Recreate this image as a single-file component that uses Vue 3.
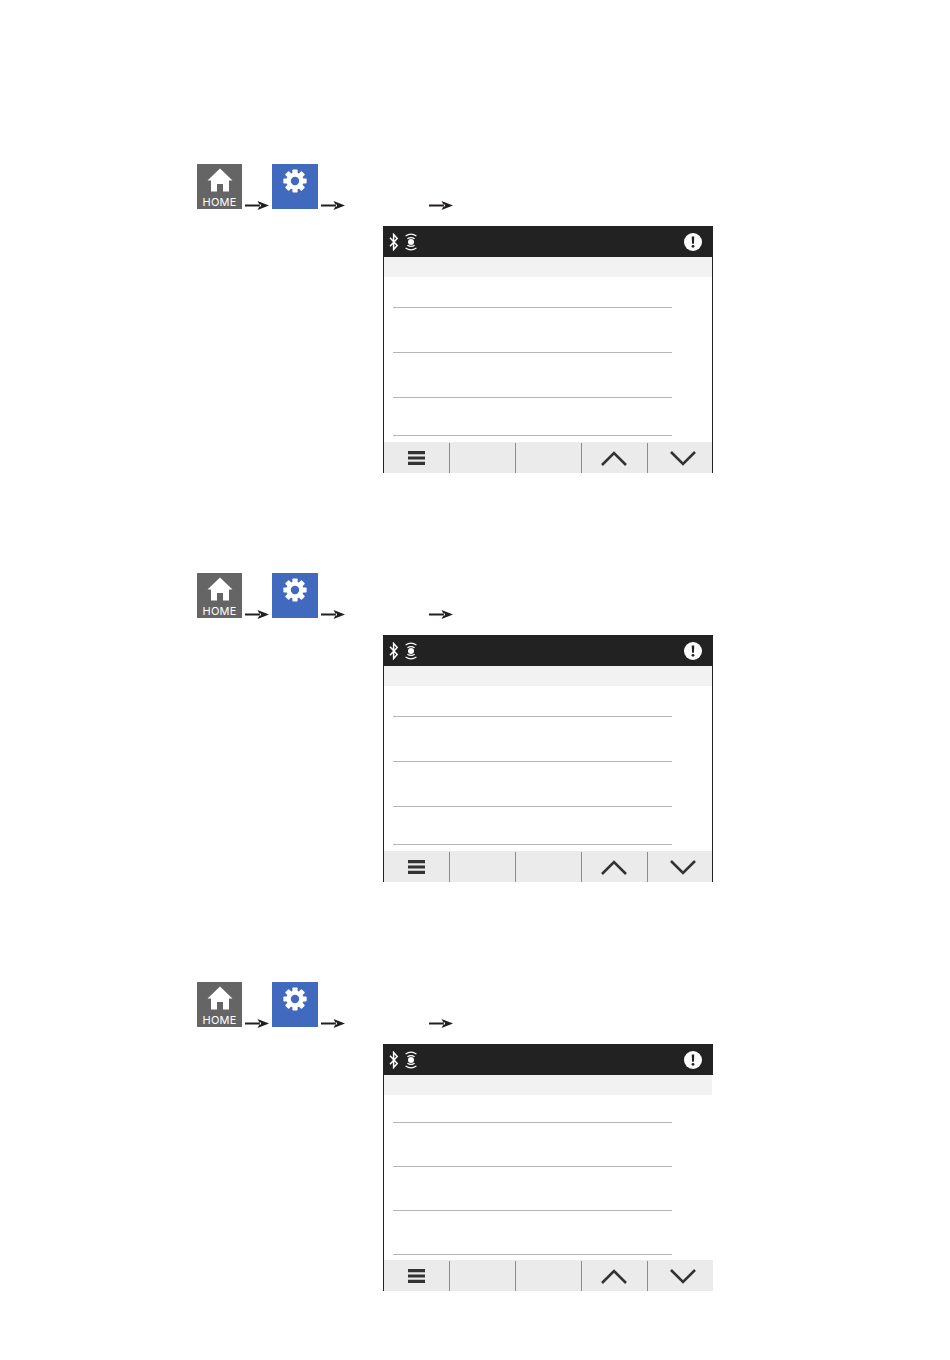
<template>
  <div class="page">
    <section v-for="panel in panels" :key="panel.id" class="panel">
      <div class="steps">
        <div class="tile tile-home">
          <svg class="home-icon" viewBox="0 0 26 24" width="26" height="24">
            <path d="M13 0.5 L25.5 12.5 L22 12.5 L22 23.5 L16 23.5 L16 16 L10 16 L10 23.5 L4 23.5 L4 12.5 L0.5 12.5 Z" fill="#fff" />
          </svg>
          <span class="home-label">HOME</span>
        </div>
        <svg class="arrow" viewBox="0 0 24 9" width="24" height="9">
          <path d="M0 3.4h16v2.2H0z M24 4.5 L12.5 0 L15 4.5 L12.5 9 Z" fill="#231f20" />
        </svg>
        <div class="tile tile-settings">
          <svg class="gear-icon" viewBox="0 0 24 24" width="24" height="24">
            <rect
              v-for="angle in teeth"
              :key="angle"
              x="9.4"
              y="0.4"
              width="5.2"
              height="6"
              rx="0.8"
              fill="#fff"
              :transform="`rotate(${angle} 12 12)`"
            />
            <circle cx="12" cy="12" r="6.4" fill="none" stroke="#fff" stroke-width="4.4" />
          </svg>
        </div>
        <svg class="arrow" viewBox="0 0 24 9" width="24" height="9">
          <path d="M0 3.4h16v2.2H0z M24 4.5 L12.5 0 L15 4.5 L12.5 9 Z" fill="#231f20" />
        </svg>
        <svg class="arrow arrow-last" viewBox="0 0 24 9" width="24" height="9">
          <path d="M0 3.4h16v2.2H0z M24 4.5 L12.5 0 L15 4.5 L12.5 9 Z" fill="#231f20" />
        </svg>
      </div>

      <div class="screen" :class="{ 'screen-open': panel.open }">
        <div class="status-bar">
          <svg class="bt-icon" viewBox="0 0 10 18" width="10" height="18">
            <path d="M1 4.8 L8.2 12.6 L4.6 16.6 L4.6 1.4 L8.2 5.4 L1 13.2" fill="none" stroke="#fff" stroke-width="1.5" />
          </svg>
          <svg class="signal-icon" viewBox="0 0 12 18" width="12" height="18">
            <circle cx="6" cy="9" r="3" fill="#fff" />
            <path d="M0.6 3 Q6 -0.6 11.4 3 M2.4 5.8 Q6 3.4 9.6 5.8 M2.4 12.2 Q6 14.6 9.6 12.2 M0.6 15 Q6 18.6 11.4 15" fill="none" stroke="#fff" stroke-width="1.2" />
          </svg>
          <svg class="alert-icon" viewBox="0 0 18 18" width="18" height="18">
            <circle cx="9" cy="9" r="9" fill="#fff" />
            <path d="M7.7 3.4h2.6l-0.4 7.4H8.1z" fill="#222" />
            <circle cx="9" cy="13.3" r="1.4" fill="#222" />
          </svg>
        </div>
        <div class="body">
          <div class="subheader"></div>
          <div class="rows">
            <div v-for="(h, i) in panel.rows" :key="i" class="row" :style="{ height: h + 'px' }"></div>
          </div>
          <div class="softkeys">
            <div class="softkey">
              <svg viewBox="0 0 17 14" width="17" height="14">
                <path d="M0 0h17v3.2H0z M0 5.4h17v3.2H0z M0 10.8h17v3.2H0z" fill="#333" />
              </svg>
            </div>
            <div class="softkey"></div>
            <div class="softkey"></div>
            <div class="softkey softkey-up">
              <svg viewBox="0 0 26 15" width="26" height="15">
                <path d="M1 14 L13 2 L25 14" fill="none" stroke="#333" stroke-width="2.6" />
              </svg>
            </div>
            <div class="softkey softkey-last">
              <svg viewBox="0 0 26 15" width="26" height="15">
                <path d="M1 1 L13 13 L25 1" fill="none" stroke="#333" stroke-width="2.6" />
              </svg>
            </div>
          </div>
        </div>
      </div>
    </section>
  </div>
</template>

<script setup>
const teeth = [0, 45, 90, 135, 180, 225, 270, 315];

const panels = [
  { id: 1, rows: [31, 45, 45, 38], open: false },
  { id: 2, rows: [31, 45, 45, 38], open: false },
  { id: 3, rows: [28, 44, 44, 44], open: true },
];
</script>

<style>
html,
body {
  background: #fff;
}
</style>

<style scoped>
.page {
  width: 950px;
  height: 1360px;
  box-sizing: border-box;
  padding: 164px 0 0 197px;
  display: flex;
  flex-direction: column;
  gap: 100px;
  font-family: Inter, "Liberation Sans", sans-serif;
}

.steps {
  display: flex;
  align-items: flex-end;
  gap: 3px;
  height: 46px;
}

.tile {
  width: 45px;
  height: 45px;
  align-self: flex-start;
  display: flex;
  flex-direction: column;
  align-items: center;
}

.tile-home {
  background-color: #656565;
}

.tile-settings {
  width: 46px;
  background-color: #4169be;
}

.home-icon {
  margin-top: 4px;
}

.home-label {
  margin-top: 4px;
  color: #fff;
  font-size: 11px;
  line-height: 13px;
  letter-spacing: 0.2px;
}

.gear-icon {
  margin-top: 5px;
}

.arrow-last {
  margin-left: 81px;
}

.screen {
  width: 330px;
  margin: 16px 0 0 186px;
}

.status-bar {
  height: 31px;
  background-color: #222;
  display: flex;
  align-items: center;
  padding: 0 11px 0 6px;
  gap: 6px;
}

.alert-icon {
  margin-left: auto;
}

.body {
  border-left: 1px solid #222;
  border-right: 1px solid #222;
}

.screen-open .body {
  border-right-color: transparent;
}

.subheader {
  height: 20px;
  background-color: #f2f2f2;
}

.rows {
  height: 165px;
  padding-left: 9px;
}

.row {
  box-sizing: border-box;
  width: 279px;
  border-bottom: 1px solid #b5b5b5;
}

.softkeys {
  height: 31px;
  background-color: #ebebeb;
  display: flex;
}

.screen-open .softkeys {
  margin-right: -1px;
}

.softkey {
  width: 66px;
  flex: none;
  box-sizing: border-box;
  margin-top: 1px;
  display: flex;
  align-items: center;
  justify-content: center;
  border-left: 1px solid #8c8c8c;
}

.softkey:first-child {
  width: 65px;
  border-left: none;
}

.softkey-up {
  padding-right: 1px;
}

.softkey-last {
  width: 65px;
  padding-left: 5px;
}
</style>
